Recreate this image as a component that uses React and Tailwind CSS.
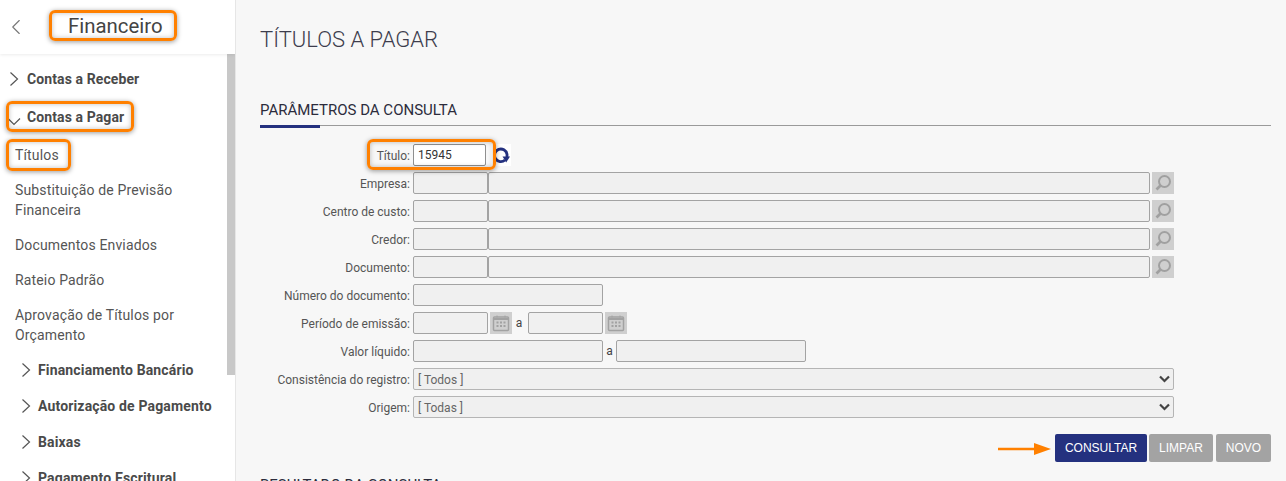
import { ChevronLeft } from 'lucide-react'

const font = { roboto: "font-['Roboto',sans-serif]" }

function Right({ className = '' }) {
  return (
    <svg width="10" height="16" viewBox="0 0 10 16" fill="none" className={`shrink-0 ${className}`}>
      <path d="M1.5 1.5 8.5 8 1.5 14.5" stroke="#555" strokeWidth="1.2" />
    </svg>
  )
}

function Down() {
  return (
    <svg width="14" height="9" viewBox="0 0 14 9" fill="none" className="shrink-0 mt-[8px] ml-[-2px] mr-[6px]">
      <path d="M1 1.5 7 7.5 13 1.5" stroke="#555" strokeWidth="1.2" />
    </svg>
  )
}

function Group({ label }) {
  return (
    <div className="h-[36px] pl-[21px] flex items-center gap-[7px] text-[14px] font-bold tracking-[0.15px] text-[#4a4a4a]">
      <Right />
      <span>{label}</span>
    </div>
  )
}

function Link({ children }) {
  return <div className="px-[15px] py-[7.5px] text-[14px] leading-[20px] tracking-[0.15px] text-[#555]">{children}</div>
}

function Sidebar() {
  return (
    <aside className="w-[236px] h-full shrink-0 bg-white border-r border-[#e6e6e6] flex flex-col overflow-hidden">
      <div className="h-[54px] shrink-0 flex items-center shadow-[0_1px_3px_rgba(0,0,0,0.08)] relative z-10">
        <ChevronLeft size={26} strokeWidth={1} color="#777" className="ml-[3px]" />
        <span className="ml-[39px] pb-[1px] text-[20.4px] text-[#444]">Financeiro</span>
      </div>
      <div className="flex-1 flex min-h-0">
        <div className="flex-1 pt-[6px] min-w-0">
          <div className="h-[38px] pl-[9px] flex items-center gap-[8px] text-[14px] font-bold tracking-[0.1px] text-[#4a4a4a]">
            <Right />
            <span>Contas a Receber</span>
          </div>
          <div className="h-[39px] pl-[9px] flex items-center text-[14px] font-bold tracking-[0.1px] text-[#4a4a4a]">
            <Down />
            <span>Contas a Pagar</span>
          </div>
          <Link>Títulos</Link>
          <Link>Substituição de Previsão Financeira</Link>
          <Link>Documentos Enviados</Link>
          <Link>Rateio Padrão</Link>
          <Link>Aprovação de Títulos por Orçamento</Link>
          <Group label="Financiamento Bancário" />
          <Group label="Autorização de Pagamento" />
          <Group label="Baixas" />
          <Group label="Pagamento Escritural" />
        </div>
        <div className="w-[8px] shrink-0">
          <div className="h-[321px] bg-[#c8c8c8]" />
        </div>
      </div>
    </aside>
  )
}

function Box({ className = '' }) {
  return <div className={`h-[22px] shrink-0 bg-[#f0f0f0] border border-[#a3a3a3] rounded-[2px] ${className}`} />
}

function Row({ label, children }) {
  return (
    <div className="h-[22px] flex items-center">
      <div className="w-[150px] mr-[3px] pt-[2px] shrink-0 text-right text-[12px] text-[#555] whitespace-nowrap">{label}</div>
      {children}
    </div>
  )
}

function SearchBtn() {
  return (
    <div className="w-[22px] h-[22px] ml-[2px] shrink-0 bg-[#cfcfcf] flex items-center justify-center">
      <svg width="18" height="18" viewBox="0 0 18 18" fill="none">
        <circle cx="10.5" cy="7.5" r="5.5" stroke="#a0a0a0" strokeWidth="2" />
        <path d="M6.5 11.5 2.5 15.5" stroke="#a0a0a0" strokeWidth="2.6" />
      </svg>
    </div>
  )
}

function CalBtn() {
  return (
    <div className="w-[22px] h-[22px] ml-[2px] shrink-0 bg-[#cfcfcf] flex items-center justify-center">
      <svg width="18" height="18" viewBox="0 0 18 18" fill="none">
        <rect x="1.5" y="3" width="15" height="13.5" rx="1" stroke="#a2a2a2" strokeWidth="1.5" />
        <path d="M1.5 5h15" stroke="#a2a2a2" strokeWidth="2" />
        <path d="M5 1.5v2M13 1.5v2" stroke="#a2a2a2" strokeWidth="1" />
        <path d="M4.5 8.5h2M8 8.5h2M11.5 8.5h2M4.5 12h2M8 12h2M11.5 12h2" stroke="#a2a2a2" strokeWidth="1.8" />
      </svg>
    </div>
  )
}

function Lookup({ label }) {
  return (
    <Row label={label}>
      <Box className="w-[75px]" />
      <Box className="w-[662px]" />
      <SearchBtn />
    </Row>
  )
}

function Select({ label, value }) {
  return (
    <Row label={label}>
      <div className="w-[761px] h-[22px] shrink-0 bg-[#f0f0f0] border border-[#b5b5b5] rounded-[2px] flex items-center justify-between pl-[4px] pr-[3px]">
        <span className="pt-[1px] text-[12px] text-[#666]">{value}</span>
        <svg width="11" height="8" viewBox="0 0 11 8" fill="none">
          <path d="M1 1.5 5.5 6 10 1.5" stroke="#444" strokeWidth="2.2" />
        </svg>
      </div>
    </Row>
  )
}

function Form() {
  return (
    <div className="mt-[18px] flex flex-col gap-[6px]">
      <Row label="Título:">
        <div className="w-[73px] h-[22px] shrink-0 bg-white border border-[#8f8f8f] rounded-[2px] pl-[4px] text-[12px] leading-[21px] text-[#333]">15945</div>
        <div className="w-[20px] h-[22px] ml-[5px] shrink-0 bg-white flex items-center justify-center">
          <svg width="18" height="18" viewBox="0 0 18 18" fill="none">
            <path d="M13 14A6.3 6.3 0 1 1 15 8.2V12" stroke="#24317f" strokeWidth="2.8" />
            <path d="M10.5 10.5h7.5L14.2 16.5z" fill="#24317f" />
          </svg>
        </div>
      </Row>
      <Lookup label="Empresa:" />
      <Lookup label="Centro de custo:" />
      <Lookup label="Credor:" />
      <Lookup label="Documento:" />
      <Row label="Número do documento:">
        <Box className="w-[190px]" />
      </Row>
      <Row label="Período de emissão:">
        <Box className="w-[75px]" />
        <CalBtn />
        <span className="w-[16px] pr-[2px] text-center text-[12px] text-[#444]">a</span>
        <Box className="w-[75px]" />
        <CalBtn />
      </Row>
      <Row label="Valor líquido:">
        <Box className="w-[190px]" />
        <span className="w-[13px] text-center text-[12px] text-[#444]">a</span>
        <Box className="w-[190px]" />
      </Row>
      <Select label="Consistência do registro:" value="[ Todos ]" />
      <Select label="Origem:" value="[ Todas ]" />
    </div>
  )
}

function Buttons() {
  const cls = "h-[28px] rounded-[2px] text-[12px] text-white font-['Liberation_Sans',sans-serif] flex items-center justify-center"
  return (
    <div className="mt-[16px] flex justify-end gap-[2px]">
      <div className={`${cls} w-[92px] bg-[#24317f]`}>CONSULTAR</div>
      <div className={`${cls} w-[64px] bg-[#a3a3a3]`}>LIMPAR</div>
      <div className={`${cls} w-[55px] ml-[1px] bg-[#a3a3a3]`}>NOVO</div>
    </div>
  )
}

function Mark({ className }) {
  return <div className={`absolute border-[3px] border-[#ff8000] rounded-[6px] shadow-[0_1px_5px_rgba(0,0,0,0.4),inset_0_0_5px_rgba(0,0,0,0.25)] ${className}`} />
}

export default function App() {
  return (
    <div className={`relative w-[1286px] h-[481px] overflow-hidden flex bg-[#f7f7f7] ${font.roboto}`}>
      <Sidebar />
      <main className="flex-1 min-w-0 pl-[24px] pr-[15px]">
        <h1 className="mt-[27px] text-[22px] leading-[26px] font-light text-[#3d3d4d]">TÍTULOS A PAGAR</h1>
        <h2 className="mt-[48px] text-[15px] leading-[18px] text-[#2c2c3c]">PARÂMETROS DA CONSULTA</h2>
        <div className="mt-[6px] h-[1px] bg-[#9a9a9a] relative">
          <div className="w-[60px] h-[3px] bg-[#24317f]" />
        </div>
        <Form />
        <Buttons />
        <h2 className="mt-[14px] text-[15px] leading-[18px] text-[#2c2c3c]">RESULTADO DA CONSULTA</h2>
      </main>

      <Mark className="left-[49px] top-[10px] w-[128px] h-[31px]" />
      <Mark className="left-[6px] top-[101px] w-[128px] h-[31px]" />
      <Mark className="left-[6px] top-[139px] w-[65px] h-[32px]" />
      <Mark className="left-[367px] top-[139px] w-[129px] h-[31px]" />
      <svg width="56" height="14" viewBox="0 0 56 14" className="absolute left-[997px] top-[442px]">
        <path d="M1 7h38" stroke="#ff8000" strokeWidth="2.5" />
        <path d="M37 1 54 7 37 13z" fill="#ff8000" />
      </svg>
    </div>
  )
}
